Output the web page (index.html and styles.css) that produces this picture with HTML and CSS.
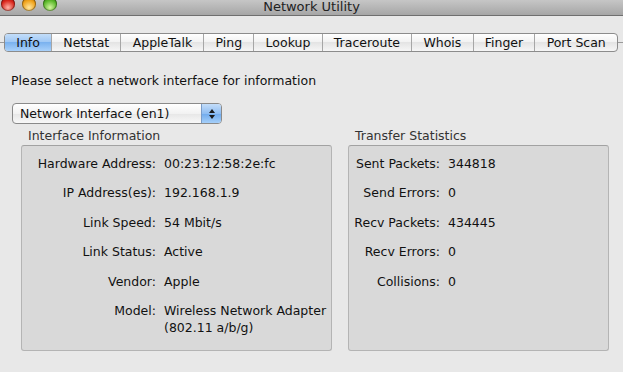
FILE: index.html
```html
<!DOCTYPE html>
<html lang="en">
<head>
    <meta charset="UTF-8">
    <title>Network Utility</title>
    <link rel="stylesheet" href="styles.css">
</head>
<body>
    <div class="window">
        <div class="titlebar">
            <div class="lights">
                <span class="light red"></span>
                <span class="light yellow"></span>
                <span class="light green"></span>
            </div>
            <div class="title">Network Utility</div>
            <div></div>
        </div>

        <div class="tabbar">
            <div class="tabs">
                <div class="tab selected">Info</div>
                <div class="tab">Netstat</div>
                <div class="tab">AppleTalk</div>
                <div class="tab">Ping</div>
                <div class="tab">Lookup</div>
                <div class="tab">Traceroute</div>
                <div class="tab">Whois</div>
                <div class="tab">Finger</div>
                <div class="tab">Port Scan</div>
            </div>
        </div>

        <p class="hint">Please select a network interface for information</p>

        <div class="popup">
            <span class="popup-text">Network Interface (en1)</span>
            <span class="popup-arrows">
                <svg width="8" height="12" viewBox="0 0 8 12">
                    <path d="M4 1 L7 5 H1 Z" fill="#1a1a1a"/>
                    <path d="M4 11 L7 7 H1 Z" fill="#1a1a1a"/>
                </svg>
            </span>
        </div>

        <div class="groups">
            <div class="group info">
                <div class="group-label">Interface Information</div>
                <div class="box">
                    <div class="key">Hardware Address:</div><div class="val">00:23:12:58:2e:fc</div>
                    <div class="key">IP Address(es):</div><div class="val">192.168.1.9</div>
                    <div class="key">Link Speed:</div><div class="val">54 Mbit/s</div>
                    <div class="key">Link Status:</div><div class="val">Active</div>
                    <div class="key">Vendor:</div><div class="val">Apple</div>
                    <div class="key">Model:</div><div class="val">Wireless Network Adapter<br>(802.11 a/b/g)</div>
                </div>
            </div>
            <div class="group stats">
                <div class="group-label">Transfer Statistics</div>
                <div class="box">
                    <div class="key">Sent Packets:</div><div class="val">344818</div>
                    <div class="key">Send Errors:</div><div class="val">0</div>
                    <div class="key">Recv Packets:</div><div class="val">434445</div>
                    <div class="key">Recv Errors:</div><div class="val">0</div>
                    <div class="key">Collisions:</div><div class="val">0</div>
                </div>
            </div>
        </div>
    </div>
</body>
</html>
```

FILE: styles.css
```css
body{margin:0; width:623px; height:372px; overflow:hidden; background:#e8e8e8; font-family:"Lucida Grande","DejaVu Sans",sans-serif; font-size:12.5px; color:#111;}
.window{height:372px;}

.titlebar{height:15px; display:grid; grid-template-columns:1fr auto 1fr; align-items:start; overflow:hidden; background:linear-gradient(#c6c6c6,#a6a6a6); border-bottom:1px solid #6f6f6f;}
.lights{display:flex; gap:7px; padding-left:1px; margin-top:-3px;}
.light{width:14px; height:14px; border-radius:50%; display:block; box-shadow:inset 0 0 0 1px rgba(0,0,0,.35);}
.red{background:radial-gradient(circle at 50% 75%,#ffb3a8,#d9261c 55%,#8e0d08);}
.yellow{background:radial-gradient(circle at 50% 75%,#ffe7a0,#f0a21a 55%,#9c5b05);}
.green{background:radial-gradient(circle at 50% 75%,#d4f5a0,#5bb82a 55%,#2a6a0c);}
.title{font-size:13px; line-height:13px; color:#222;}

.tabbar{margin-top:17px; padding:0 5px 0 4px; background:linear-gradient(transparent 9px,#9a9a9a 9px,#9a9a9a 10px,transparent 10px);}
.tabs{display:flex; height:17px; border:1px solid #8c8c8c; border-radius:4px; overflow:hidden; background:linear-gradient(#ffffff,#f1f1f1 50%,#e4e4e4 50%,#f6f6f6);}
.tab{padding:0 10px; line-height:17px; border-left:1px solid #a6a6a6; flex:auto; text-align:center;}
.tab:first-child{border-left:none;}
.tab.selected{background:linear-gradient(#c3ddf9,#9cc6f4 50%,#7bb2ef 50%,#a9d1fa);}

.hint{margin:21px 0 0 11px; line-height:16px;}

.popup{margin:14px 0 0 12px; width:208px; height:19px; display:flex; border:1px solid #8a8a8a; border-radius:4px; overflow:hidden; background:linear-gradient(#ffffff,#f2f2f2 50%,#e6e6e6 50%,#f8f8f8);}
.popup-text{flex:1; padding-left:7px; line-height:19px;}
.popup-arrows{width:19px; display:flex; align-items:center; justify-content:center; border-left:1px solid #7a9cc8; background:linear-gradient(#c3ddf9,#8fbdf2 50%,#6ea9ec 50%,#a5cff9);}

.groups{display:flex; gap:16px; margin:4px 0 0 21px;}
.group-label{padding-left:7px; line-height:16px; color:#333; margin-bottom:1px;}
.box{height:195px; border:1px solid #b4b4b4; border-top-color:#a2a2a2; border-radius:3px; background:#d9d9d9; display:grid; align-content:start; column-gap:8px; row-gap:12.4px; padding-top:9px;}
.info .box{width:309px; grid-template-columns:134px auto;}
.stats .box{width:259px; grid-template-columns:91px auto;}
.key{text-align:right; line-height:17px;}
.val{line-height:17px;}
```
